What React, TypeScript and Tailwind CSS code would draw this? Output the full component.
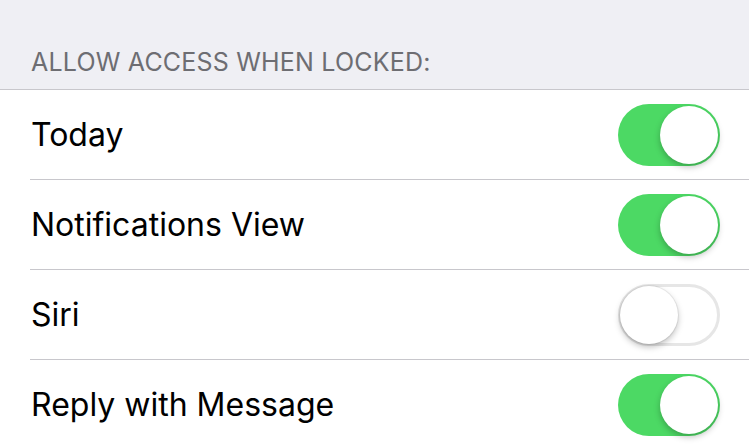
import React from "react";

type Row = { label: string; on: boolean };

const rows: Row[] = [
  { label: "Today", on: true },
  { label: "Notifications View", on: true },
  { label: "Siri", on: false },
  { label: "Reply with Message", on: true },
];

const Toggle = ({ on }: { on: boolean }) => (
  <div
    className={
      on
        ? "relative w-[102px] h-[62px] rounded-full bg-[#4cd964]"
        : "relative w-[102px] h-[62px] rounded-full bg-white border-[3px] border-[#e6e6e6]"
    }
  >
    <div
      className={
        on
          ? "absolute top-[2px] right-[2px] w-[58px] h-[58px] rounded-full bg-white shadow-[0_3px_6px_rgba(0,0,0,0.25)]"
          : "absolute top-[-1px] left-[-1px] w-[58px] h-[58px] rounded-full bg-white shadow-[0_3px_6px_rgba(0,0,0,0.25),0_0_0_1px_rgba(0,0,0,0.06)]"
      }
    />
  </div>
);

export default function App() {
  return (
    <div
      className="w-[749px] h-[444px] overflow-hidden bg-white"
      style={{ fontFamily: "Inter, 'Liberation Sans', sans-serif" }}
    >
      <div className="h-[90px] bg-[#efeff4] border-b border-[#c8c7cc] flex items-end px-[31px] pb-[14px]">
        <span className="text-[25px] leading-none text-[#6d6d72] tracking-[0.2px]">
          ALLOW ACCESS WHEN LOCKED:
        </span>
      </div>
      {rows.map((r, i) => (
        <div key={r.label} className="pl-[30px]">
          <div
            className={
              i < rows.length - 1
                ? "h-[90px] flex items-center justify-between pr-[29px] border-b border-[#c8c7cc]"
                : "h-[90px] flex items-center justify-between pr-[29px]"
            }
          >
            <span className="pl-[1px] text-[32px] text-black">{r.label}</span>
            <Toggle on={r.on} />
          </div>
        </div>
      ))}
    </div>
  );
}
